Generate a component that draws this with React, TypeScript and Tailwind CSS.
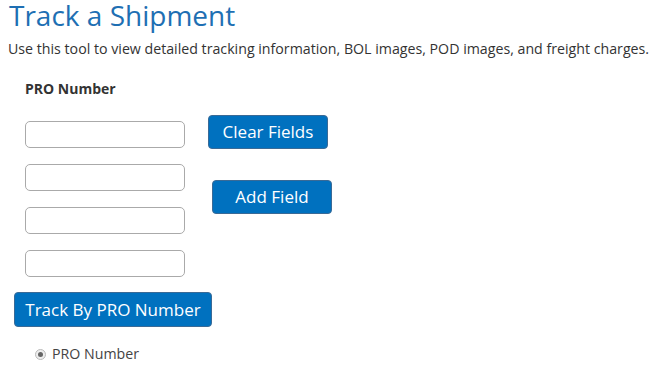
import React from "react";

export default function App() {
  const font = { fontFamily: '"Open Sans", "Noto Sans", sans-serif' };
  return (
    <div className="bg-white w-[659px] h-[373px] overflow-hidden text-[#333]" style={font}>
      <h1 className="pl-[9px] -mt-[3px] text-[28px] leading-[36px] text-[#1e6fb3] font-normal">
        Track a Shipment
      </h1>
      <p className="pl-[8px] mt-[7px] text-[14.2px] leading-[18px] text-[#333] whitespace-nowrap">
        Use this tool to view detailed tracking information, BOL images, POD images, and freight charges.
      </p>
      <div className="pl-[25px] mt-[22px] text-[14px] leading-[18px] font-bold text-[#333]">
        PRO Number
      </div>
      <div className="flex mt-[23px]">
        <div className="flex flex-col gap-[16px] pl-[25px]">
          {[0, 1, 2, 3].map((i) => (
            <input
              key={i}
              type="text"
              className="w-[160px] h-[27px] border border-[#aaa] rounded-[5px] bg-white outline-none"
            />
          ))}
        </div>
        <div className="flex flex-col -mt-[6px]">
          <button className="ml-[23px] w-[120px] h-[34px] bg-[#0071bf] border border-[#3a6a96] rounded-[4px] text-white text-[17px] leading-[20px]">
            Clear Fields
          </button>
          <button className="ml-[27px] mt-[31px] w-[120px] h-[34px] bg-[#0071bf] border border-[#3a6a96] rounded-[4px] text-white text-[17px] leading-[20px]">
            Add Field
          </button>
        </div>
      </div>
      <button className="ml-[14px] mt-[15px] w-[198px] h-[35px] bg-[#0071bf] border border-[#3a6a96] rounded-[4px] text-white text-[17px] leading-[20px]">
        Track By PRO Number
      </button>
      <label className="flex items-center ml-[35px] mt-[18px] text-[14.2px] leading-[18px] text-[#444]">
        <span className="w-[11px] h-[11px] rounded-full border border-[#bbb] bg-[#eee] flex items-center justify-center">
          <span className="w-[5px] h-[5px] rounded-full bg-[#666]" />
        </span>
        <span className="ml-[6px]">PRO Number</span>
      </label>
    </div>
  );
}
